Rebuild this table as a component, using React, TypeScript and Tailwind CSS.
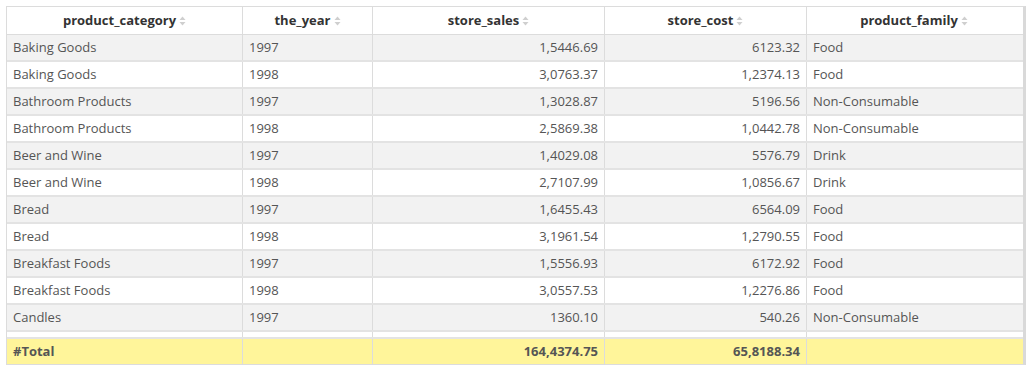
import React from "react";

const rows: [string, string, string, string, string][] = [
  ["Baking Goods", "1997", "1,5446.69", "6123.32", "Food"],
  ["Baking Goods", "1998", "3,0763.37", "1,2374.13", "Food"],
  ["Bathroom Products", "1997", "1,3028.87", "5196.56", "Non-Consumable"],
  ["Bathroom Products", "1998", "2,5869.38", "1,0442.78", "Non-Consumable"],
  ["Beer and Wine", "1997", "1,4029.08", "5576.79", "Drink"],
  ["Beer and Wine", "1998", "2,7107.99", "1,0856.67", "Drink"],
  ["Bread", "1997", "1,6455.43", "6564.09", "Food"],
  ["Bread", "1998", "3,1961.54", "1,2790.55", "Food"],
  ["Breakfast Foods", "1997", "1,5556.93", "6172.92", "Food"],
  ["Breakfast Foods", "1998", "3,0557.53", "1,2276.86", "Food"],
  ["Candles", "1997", "1360.10", "540.26", "Non-Consumable"],
];

const cols = [
  { key: "product_category", w: "w-[236px]", align: "text-left" },
  { key: "the_year", w: "w-[130px]", align: "text-left" },
  { key: "store_sales", w: "w-[232px]", align: "text-right" },
  { key: "store_cost", w: "w-[202px]", align: "text-right" },
  { key: "product_family", w: "w-[214px]", align: "text-left" },
];

function SortIcon() {
  return (
    <svg width="7" height="10" viewBox="0 0 7 10" className="ml-[3px] inline-block">
      <path d="M3.5 0.5 L6.5 4 L0.5 4 Z" fill="#cfcfcf" />
      <path d="M3.5 9.5 L6.5 6 L0.5 6 Z" fill="#cfcfcf" />
    </svg>
  );
}

const sep = (i: number) => (i < cols.length - 1 ? "border-r border-[#dcdcdc]" : "");

export default function App() {
  return (
    <div className="w-[1034px] h-[372px] bg-white pt-[6px] pl-[6px] font-['Open_Sans','Noto_Sans',sans-serif] text-[13px]">
      <div className="w-[1020px] border border-[#dcdcdc] border-r-[3px] border-r-[#d9d9d9]">
        {/* header */}
        <div className="flex h-[28px] border-b border-[#dcdcdc] bg-white">
          {cols.map((c, i) => (
            <div
              key={c.key}
              className={`${c.w} flex items-center justify-center font-bold text-[#333] ${sep(i)}`}
            >
              {c.key}
              <SortIcon />
            </div>
          ))}
        </div>

        {/* body, scrolled so the next row only peeks in */}
        <div className="h-[302px] overflow-hidden">
          {rows.map((r, ri) => (
            <div
              key={ri}
              className={`flex h-[27px] border-b-2 border-[#e3e3e3] ${ri % 2 === 0 ? "bg-[#f2f2f2]" : "bg-white"}`}
            >
              {cols.map((c, i) => (
                <div
                  key={c.key}
                  className={`${c.w} ${c.align} px-[6px] leading-[25px] text-[#555] whitespace-nowrap ${sep(i)}`}
                >
                  {r[i]}
                </div>
              ))}
            </div>
          ))}
          <div className="flex h-[5px] bg-white">
            {cols.map((c, i) => (
              <div key={c.key} className={`${c.w} ${sep(i)}`} />
            ))}
          </div>
        </div>

        {/* total */}
        <div className="flex h-[27px] border-t-2 border-[#e3e3e3] bg-[#fff59a] font-bold text-[#555]">
          {["#Total", "", "164,4374.75", "65,8188.34", ""].map((v, i) => (
            <div
              key={i}
              className={`${cols[i].w} ${cols[i].align} px-[6px] leading-[25px] ${sep(i)}`}
            >
              {v}
            </div>
          ))}
        </div>
      </div>
    </div>
  );
}
